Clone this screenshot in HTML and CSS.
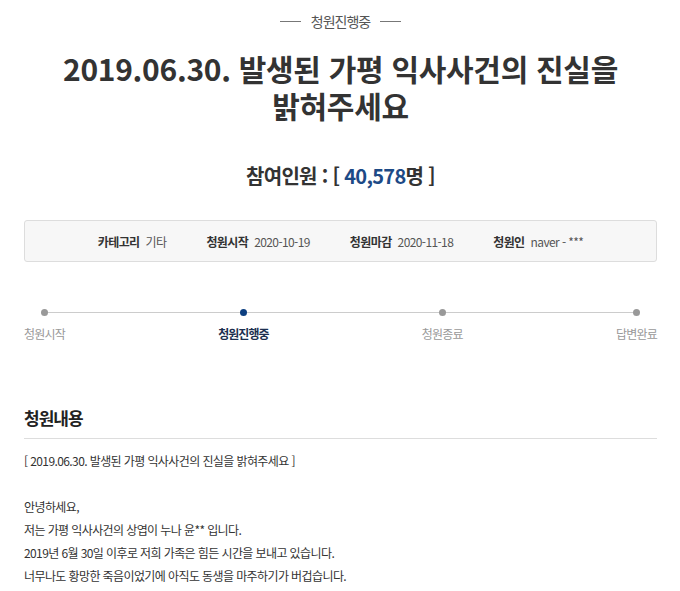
FILE: index.html
```html
<!DOCTYPE html>
<html lang="ko">
<head>
<meta charset="utf-8">
<link rel="stylesheet" href="styles.css">
</head>
<body>
<div class="page">
  <div class="status"><span class="dash"></span><span class="status-text">청원진행중</span><span class="dash"></span></div>
  <h1 class="title">2019.06.30. 발생된 가평 익사사건의 진실을<br>밝혀주세요</h1>
  <div class="count">참여인원 : [ <span class="num">40,578</span>명 ]</div>
  <div class="info">
    <div class="item"><span class="label">카테고리</span><span class="value">기타</span></div>
    <div class="item"><span class="label">청원시작</span><span class="value">2020-10-19</span></div>
    <div class="item"><span class="label">청원마감</span><span class="value">2020-11-18</span></div>
    <div class="item"><span class="label">청원인</span><span class="value">naver - ***</span></div>
  </div>
  <div class="steps">
    <div class="step"><span class="dot"></span><span class="step-label">청원시작</span></div>
    <div class="step active"><span class="dot"></span><span class="step-label">청원진행중</span></div>
    <div class="step"><span class="dot"></span><span class="step-label">청원종료</span></div>
    <div class="step"><span class="dot"></span><span class="step-label">답변완료</span></div>
  </div>
  <h2 class="section-title">청원내용</h2>
  <div class="content">
    <p>[ 2019.06.30. 발생된 가평 익사사건의 진실을 밝혀주세요 ]</p>
    <p class="blank">&nbsp;</p>
    <p>안녕하세요,</p>
    <p>저는 가평 익사사건의 상엽이 누나 윤** 입니다.</p>
    <p>2019년 6월 30일 이후로 저희 가족은 힘든 시간을 보내고 있습니다.</p>
    <p>너무나도 황망한 죽음이었기에 아직도 동생을 마주하기가 버겁습니다.</p>
    <p>동생의 억울한 죽음을 밝혀주시기 바랍니다.</p>
  </div>
</div>
</body>
</html>
```
FILE: styles.css
```css
html, body {
  margin: 0;
  padding: 0;
  background: #fff;
}
body {
  font-family: "Noto Sans CJK KR", "Noto Sans", sans-serif;
  color: #333;
}
.page {
  padding: 11px 23px 0 24px;
}
.status {
  display: flex;
  justify-content: center;
  align-items: center;
  gap: 10px;
  height: 20px;
}
.dash {
  width: 21px;
  height: 1px;
  background: #777;
}
.status-text {
  font-size: 14px;
  color: #555;
  letter-spacing: -1px;
  line-height: 20px;
}
.title {
  margin: 19px 0 0;
  text-align: center;
  font-size: 30px;
  line-height: 37px;
  font-weight: 700;
  color: #333;
  letter-spacing: -0.3px;
}
.count {
  margin-top: 40px;
  text-align: center;
  font-size: 20px;
  line-height: 24px;
  font-weight: 700;
  color: #333;
  letter-spacing: -0.7px;
}
.num {
  color: #1d4a86;
}
.info {
  margin-top: 32px;
  height: 42px;
  box-sizing: border-box;
  border: 1px solid #ddd;
  border-radius: 3px;
  background: #f7f7f7;
  display: flex;
  justify-content: center;
  align-items: center;
  gap: 40px;
  font-size: 12px;
  letter-spacing: -0.6px;
}
.item {
  display: flex;
  gap: 6px;
}
.label {
  font-weight: 700;
  color: #333;
}
.value {
  color: #555;
}
.steps {
  position: relative;
  margin-top: 47px;
  display: flex;
  justify-content: space-between;
}
.steps::before {
  content: "";
  position: absolute;
  left: 20px;
  right: 21px;
  top: 3px;
  height: 1px;
  background: #ccc;
}
.step {
  display: flex;
  flex-direction: column;
  align-items: center;
  gap: 10px;
  position: relative;
}
.dot {
  width: 7px;
  height: 7px;
  border-radius: 50%;
  background: #999;
}
.step-label {
  font-size: 12px;
  line-height: 16px;
  color: #999;
  letter-spacing: -0.8px;
}
.step.active .dot {
  background: #0d3f80;
}
.step.active .step-label {
  color: #1c2f4f;
  font-weight: 700;
  letter-spacing: -1px;
}
.section-title {
  margin: 64px 0 0;
  font-size: 17px;
  line-height: 24px;
  font-weight: 700;
  color: #222;
  letter-spacing: -1px;
  padding-bottom: 8px;
  border-bottom: 1px solid #ddd;
}
.content {
  margin-top: 10px;
  font-size: 12px;
  line-height: 23px;
  color: #333;
  letter-spacing: -0.6px;
}
.content p {
  margin: 0;
}
```
